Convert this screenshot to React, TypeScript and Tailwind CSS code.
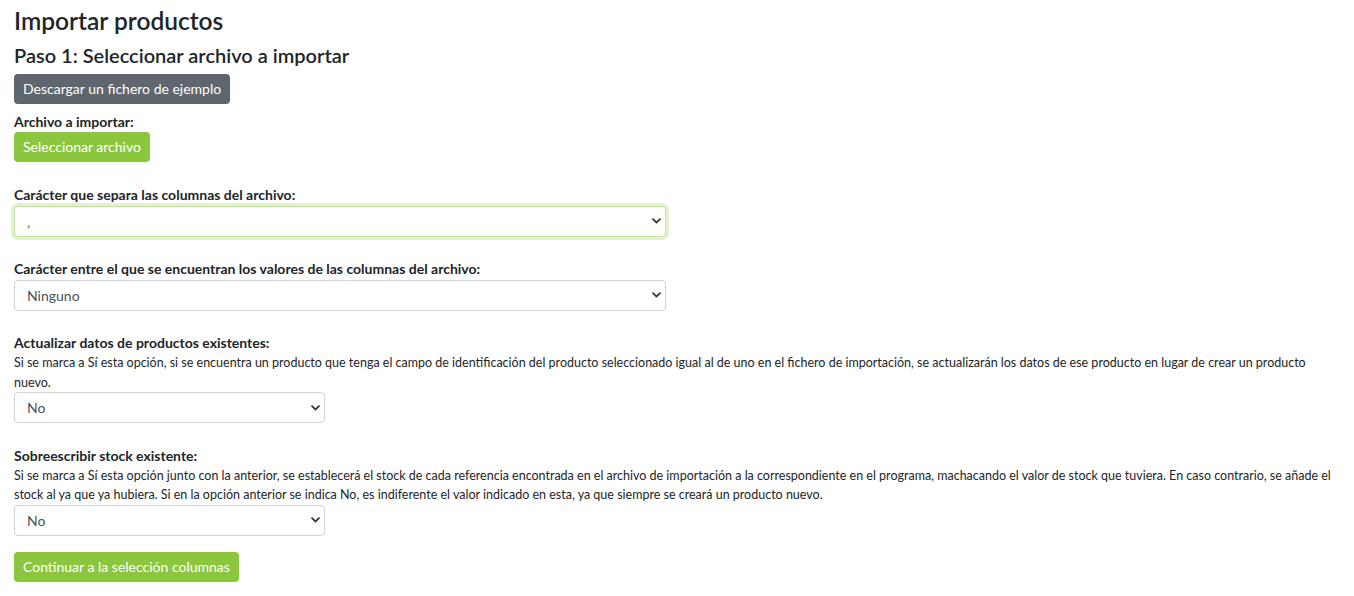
import React from "react";

function Chevron() {
  return (
    <svg
      className="pointer-events-none absolute right-[5px] top-1/2 -translate-y-1/2"
      width="9"
      height="6"
      viewBox="0 0 9 6"
      fill="none"
    >
      <path d="M1 1.2l3.5 3.3 3.5-3.3" stroke="#343a40" strokeWidth="1.8" strokeLinecap="round" strokeLinejoin="round" />
    </svg>
  );
}

function Select({ value, width, focused }: { value: string; width: string; focused?: boolean }) {
  return (
    <div className={`relative ${width}`}>
      <div
        className={
          "h-[31px] w-full rounded-[4px] border bg-white pl-[12px] pr-[28px] text-[14px] leading-[29px] text-[#495057] " +
          (focused
            ? "border-[#c3e39a] shadow-[0_0_0_3px_rgba(141,198,63,0.25)]"
            : "border-[#ced4da]")
        }
      >
        {value}
      </div>
      <Chevron />
    </div>
  );
}

export default function App() {
  return (
    <div
      className="min-h-[596px] bg-white px-[14px] text-[12.5px] leading-[19.5px] text-[#212529]"
      style={{ fontFamily: "Lato, 'Open Sans', sans-serif" }}
    >
      <h1 className="pt-[6px] text-[24.5px] leading-[29px] font-semibold">Importar productos</h1>
      <h2 className="mt-[8px] text-[20px] leading-[24px] font-semibold">Paso 1: Seleccionar archivo a importar</h2>
      <button className="mt-[7px] flex h-[30px] items-center rounded-[4px] bg-[#5f666d] px-[9px] text-[14px] text-white">
        Descargar un fichero de ejemplo
      </button>

      <div className="mt-[6.5px] text-[14px] leading-[21px] font-bold">Archivo a importar:</div>
      <button className="flex h-[30px] items-center rounded-[4px] bg-[#8cc63f] px-[9px] text-[14px] text-white">
        Seleccionar archivo
      </button>

      <div className="mt-[22.5px] text-[14px] leading-[21px] font-bold">Carácter que separa las columnas del archivo:</div>
      <div className="mt-[0.5px]">
        <Select value="," width="w-[652px]" focused />
      </div>

      <div className="mt-[21.5px] text-[14px] leading-[21px] font-bold">
        Carácter entre el que se encuentran los valores de las columnas del archivo:
      </div>
      <div className="mt-[0.5px]">
        <Select value="Ninguno" width="w-[652px]" />
      </div>

      <div className="mt-[21.5px] text-[14px] leading-[21px] font-bold">Actualizar datos de productos existentes:</div>
      <p>
        Si se marca a Sí esta opción, si se encuentra un producto que tenga el campo de identificación del producto
        seleccionado igual al de uno en el fichero de importación, se actualizarán los datos de ese producto en lugar de
        crear un producto nuevo.
      </p>
      <Select value="No" width="w-[311px]" />

      <div className="mt-[21.5px] text-[14px] leading-[21px] font-bold">Sobreescribir stock existente:</div>
      <p>
        Si se marca a Sí esta opción junto con la anterior, se establecerá el stock de cada referencia encontrada en el
        archivo de importación a la correspondiente en el programa, machacando el valor de stock que tuviera. En caso
        contrario, se añade el stock al ya que ya hubiera. Si en la opción anterior se indica No, es indiferente el valor
        indicado en esta, ya que siempre se creará un producto nuevo.
      </p>
      <Select value="No" width="w-[311px]" />

      <button className="mt-[16px] flex h-[30px] items-center rounded-[4px] bg-[#8cc63f] px-[9px] text-[14px] text-white">
        Continuar a la selección columnas
      </button>
    </div>
  );
}
